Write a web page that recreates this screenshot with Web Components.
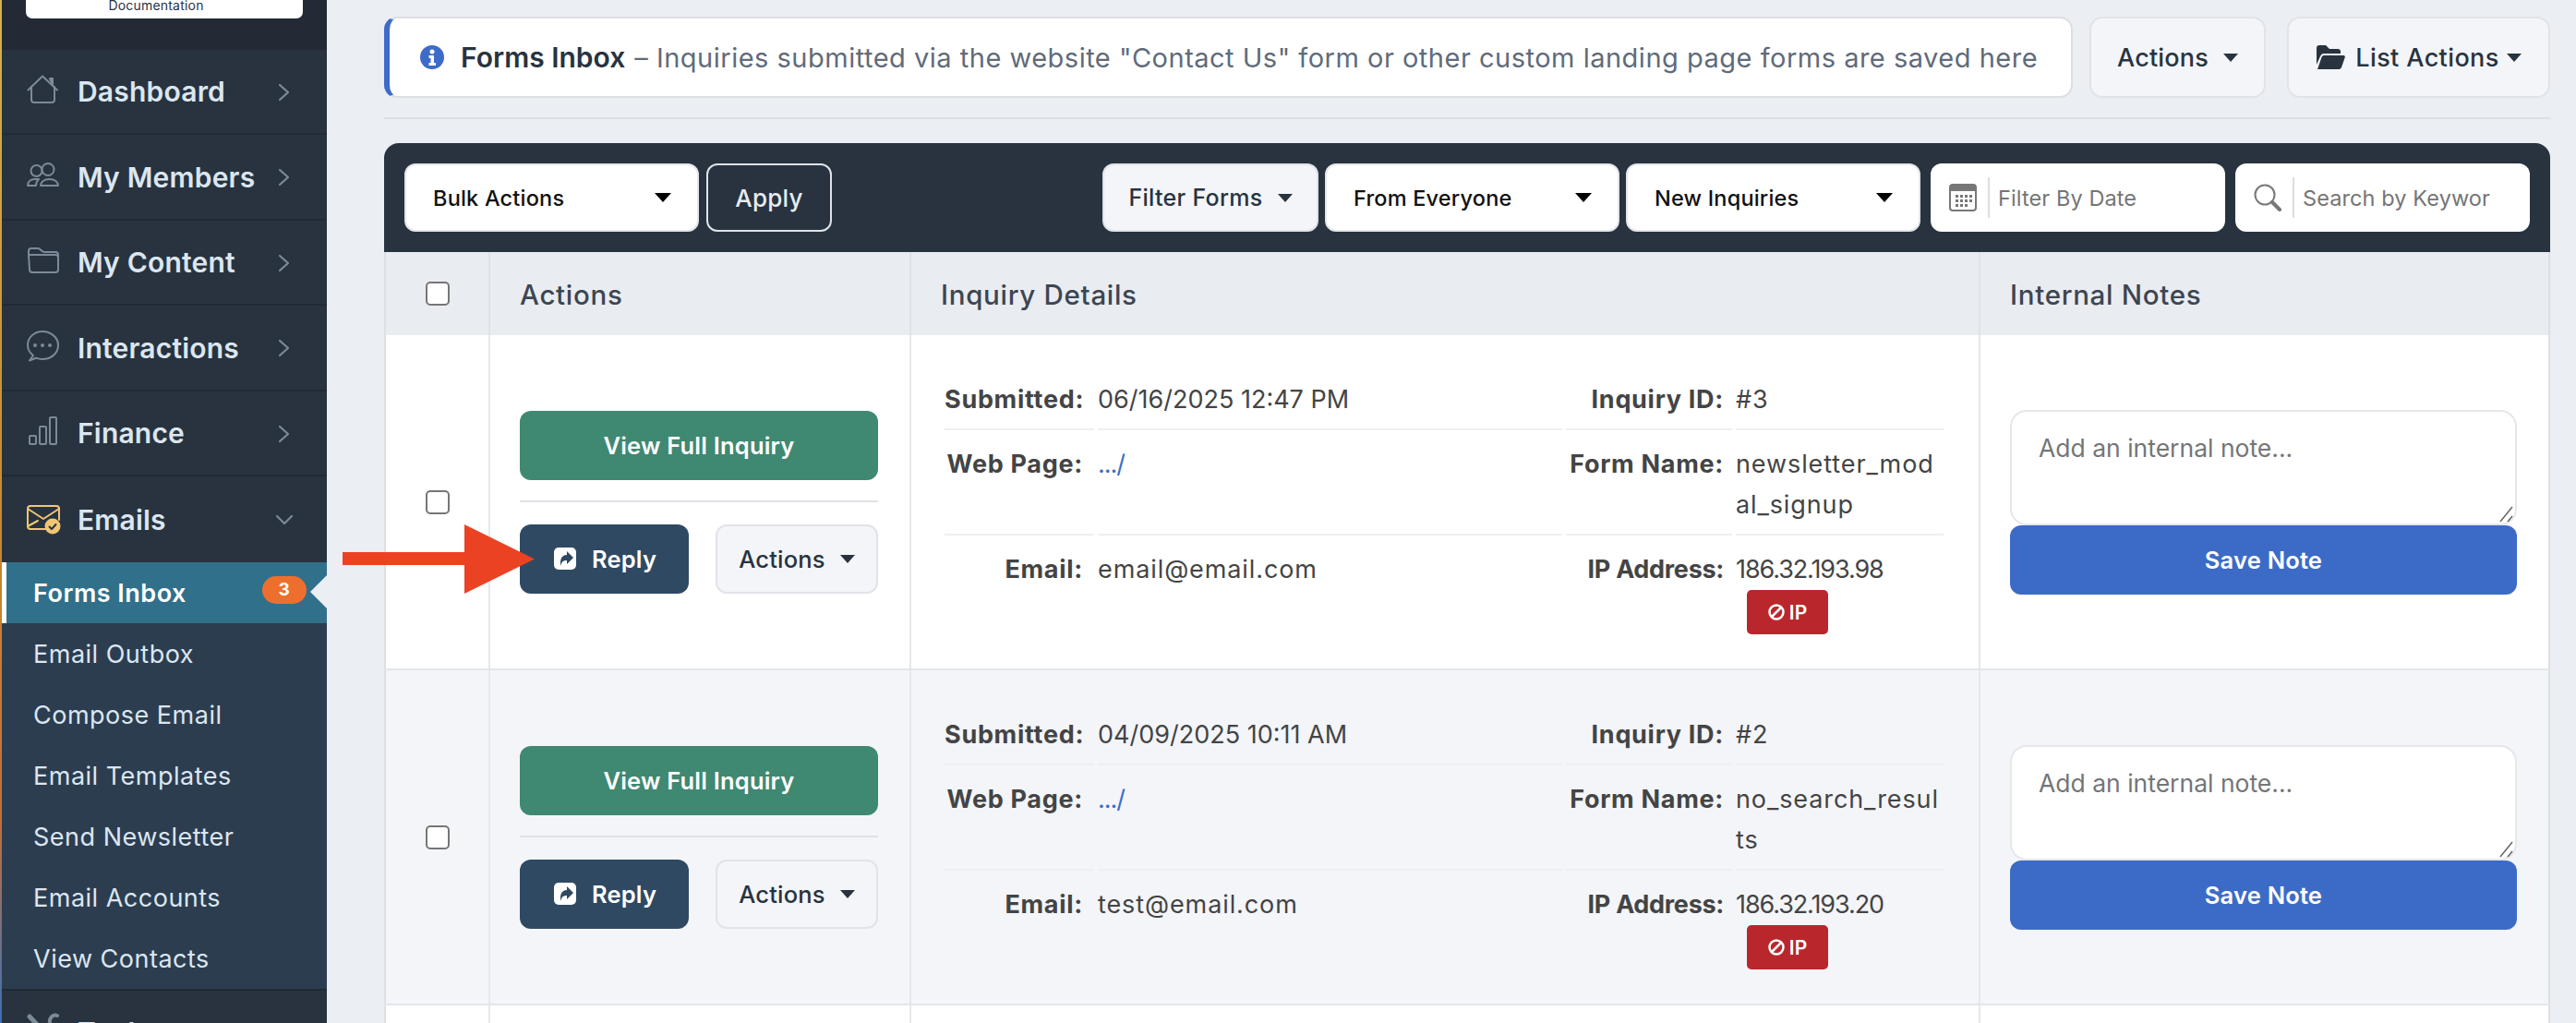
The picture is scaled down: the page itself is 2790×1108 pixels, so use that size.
<!DOCTYPE html>
<html>
<head>
<meta charset="utf-8">
<title>Forms Inbox</title>
<style>
  html, body { margin: 0; padding: 0; }
  body {
    width: 2790px; height: 1108px; overflow: hidden;
    display: flex; background: #ebeef3;
    font-family: Inter, "Noto Sans", sans-serif; color: #28333f;
  }
</style>
</head>
<body>
<app-sidebar>
  <nav-item icon="house" label="Dashboard"></nav-item>
  <nav-item icon="people" label="My Members"></nav-item>
  <nav-item icon="folder" label="My Content"></nav-item>
  <nav-item icon="chat" label="Interactions"></nav-item>
  <nav-item icon="bars" label="Finance"></nav-item>
  <nav-item icon="envelope" label="Emails" open></nav-item>
  <sub-menu>
    <sub-item active badge="3">Forms Inbox</sub-item>
    <sub-item>Email Outbox</sub-item>
    <sub-item>Compose Email</sub-item>
    <sub-item>Email Templates</sub-item>
    <sub-item>Send Newsletter</sub-item>
    <sub-item>Email Accounts</sub-item>
    <sub-item>View Contacts</sub-item>
  </sub-menu>
  <nav-item icon="tools" label="Tools"></nav-item>
</app-sidebar>

<inbox-page>
  <inquiry-row submitted="06/16/2025 12:47 PM" inquiry="#3" form1="newsletter_mod" form2="al_signup" email="email@email.com" ip="186.32.193.98"></inquiry-row>
  <inquiry-row alt submitted="04/09/2025 10:11 AM" inquiry="#2" form1="no_search_resul" form2="ts" email="test@email.com" ip="186.32.193.20"></inquiry-row>
  <inquiry-row blank></inquiry-row>
</inbox-page>

<callout-arrow></callout-arrow>

<script>
const ICONS = {
  house: '<path d="M1.500 19.500 17 4.500l16 15"/><path d="M25 7h3v7z" fill="currentColor"/><path d="M5 16v14a3 3 0 0 0 3 3h19a3 3 0 0 0 3-3V16"/>',
  people: '<circle cx="10.500" cy="15" r="6"/><circle cx="23" cy="13.500" r="6.500"/><path d="M1 31c0-4 3-7 8-7h4c-2 2-3 4-3 7z"/><path d="M15 31c0-4 4-7 9.500-7S34 27 34 31z"/>',
  folder: '<path d="M2 15V9a3 3 0 0 1 3-3h7c3 0 4 4 7 4h12a3 3 0 0 1 3 3v2"/><path d="M2 13h29a3 3 0 0 1 3 3v13a3 3 0 0 1-3 3H6a3 3 0 0 1-3-3z"/>',
  chat: '<path d="M3 35.500l4-5.500C3 27 1 23.500 1 19 1 10 8.500 4 17 4s17 6 17 15-8 15-17 15c-3 0-5-.4-7-1.300z"/><circle cx="9" cy="19" r="1" fill="currentColor"/><circle cx="17" cy="19" r="1" fill="currentColor"/><circle cx="25" cy="19" r="1" fill="currentColor"/>',
  bars: '<rect x="3" y="24" width="7" height="9" rx="1"/><rect x="14" y="14" width="7" height="19" rx="1"/><rect x="25" y="4" width="7" height="29" rx="1"/>',
  envelope: '<g transform="translate(0 5)"><path d="M22 27H4a3 3 0 0 1-3-3V5a3 3 0 0 1 3-3h28a3 3 0 0 1 3 3v12"/><path d="M1 5l17 11L35 5"/><path d="M1 24l11-6"/><circle cx="28" cy="24" r="8.500" fill="currentColor" stroke="none"/><path d="M24.500 24.500l2.500 2.500 4.500-5" stroke="#28333f"/></g>',
  tools: '<path d="M3 4l13 14M20 30l8-14" stroke-width="5"/><path d="M33 3c-5-2-9 3-8 8" stroke-width="4"/>'
};

class AppSidebar extends HTMLElement {
  connectedCallback() {
    this.attachShadow({ mode: 'open' });
    this.shadowRoot.innerHTML = `
      <style>
        * { box-sizing: border-box; }
        :host { box-sizing: border-box; display: flex; flex-direction: column; flex: none; width: 354px; height: 1108px; overflow: hidden; position: relative; padding-left: 2px; background: #28333f; }
        :host::before { content: ""; position: absolute; left: 0; top: 0; bottom: 0; width: 2px; background: linear-gradient(#d4b24a, #c8862f 55%, #c0703a 80%, #3b6fb5); }
        .head { height: 53.500px; flex: none; background: #232a36; padding-left: 26px; }
        .logo { width: 300px; height: 20px; background: #fff; border-radius: 0 0 7px 7px; display: flex; justify-content: center; align-items: center; overflow: hidden; color: #28333f; font-size: 14px; line-height: 11px; padding: 0 18px 9px 0; letter-spacing: .2px; }
      </style>
      <div class="head"><div class="logo">Documentation</div></div>
      <slot></slot>`;
  }
}
customElements.define('app-sidebar', AppSidebar);

class NavItem extends HTMLElement {
  connectedCallback() {
    const open = this.hasAttribute('open');
    const name = this.getAttribute('icon');
    this.attachShadow({ mode: 'open' });
    this.shadowRoot.innerHTML = `
      <style>
        * { box-sizing: border-box; }
        :host { box-sizing: border-box; display: flex; align-items: center; flex: none; height: 92.500px; padding-left: 27px; border-bottom: 2px solid #212a35; color: #dbe6f0; background: #28333f; }
        .ic { width: 36px; height: 36px; margin-top: -6px; color: ${open ? '#f0c674' : '#7d8a98'}; flex: none; }
        .ic svg { display: block; overflow: visible; fill: none; stroke: currentColor; stroke-width: 2; stroke-linecap: round; stroke-linejoin: round; }
        .txt { margin-left: 19px; padding-top: 1px; font-size: 30px; font-weight: 600; letter-spacing: .2px; flex: 1; white-space: nowrap; }
        .chev { width: 20px; height: 20px; margin: 2px 36px 0 0; color: #7d8a98; fill: none; stroke: currentColor; stroke-width: 2.200; stroke-linecap: round; stroke-linejoin: round; }
      </style>
      <span class="ic"><svg width="36" height="36" viewBox="0 0 36 36">${ICONS[name]}</svg></span>
      <span class="txt">${this.getAttribute('label')}</span>
      <svg class="chev" viewBox="0 0 20 20">${open ? '<path d="M2 6l8 8 8-8"/>' : '<path d="M5 2l9 8-9 8"/>'}</svg>`;
    if (open) this.style.borderBottom = '0';
  }
}
customElements.define('nav-item', NavItem);

class SubMenu extends HTMLElement {
  connectedCallback() {
    this.attachShadow({ mode: 'open' });
    this.shadowRoot.innerHTML = `
      <style>
        :host { display: block; flex: none; background: #2c3d50; border-bottom: 2px solid #212a35; }
      </style>
      <slot></slot>`;
  }
}
customElements.define('sub-menu', SubMenu);

class SubItem extends HTMLElement {
  connectedCallback() {
    const active = this.hasAttribute('active');
    const badge = this.getAttribute('badge');
    this.attachShadow({ mode: 'open' });
    this.shadowRoot.innerHTML = `
      <style>
        * { box-sizing: border-box; }
        :host { box-sizing: border-box; display: flex; align-items: center; position: relative; height: 66px; padding-left: 34px; padding-top: 1px; font-size: 27px; color: #dbe6f0; font-weight: 400; letter-spacing: .5px; white-space: nowrap; }
        :host([active]) { background: #31708a; color: #fff; font-weight: 600; border-left: 5px solid #fff; padding-left: 29px; }
        .badge { position: absolute; right: 22px; top: 15px; width: 48px; height: 30px; border-radius: 15px; background: #ee6f2d; color: #fff; font-size: 19px; font-weight: 700; display: flex; align-items: center; justify-content: center; }
        .tip { position: absolute; right: 0; top: 14px; width: 0; height: 0; border: 18px solid transparent; border-right-color: #ebeef3; border-left: 0; }
      </style>
      <slot></slot>
      ${badge ? `<span class="badge">${badge}</span>` : ''}
      ${active ? '<span class="tip"></span>' : ''}`;
  }
}
customElements.define('sub-item', SubItem);

class UiBtn extends HTMLElement {
  connectedCallback() {
    this.attachShadow({ mode: 'open' });
    this.shadowRoot.innerHTML = `
      <style>
        * { box-sizing: border-box; }
        :host { box-sizing: border-box; display: flex; align-items: center; justify-content: center; height: 75px; border-radius: 12px; font-size: 25.500px; font-weight: 600; white-space: nowrap; letter-spacing: .2px; }
        :host([variant=green]) { background: #3f8872; color: #fff; }
        :host([variant=blue]) { background: #3c6bc7; color: #fff; }
        :host([variant=navy]) { background: #304963; color: #fff; }
        :host([variant=light]) { background: #f3f5f9; color: #28333f; border: 2px solid #e1e3e8; font-weight: 500; }
        :host([variant=ghost]) { background: #28333f; color: #e6ecf2; border: 2px solid #dfe3e8; font-weight: 500; }
        .caret { margin-left: var(--caret-gap, 16px); width: 0; height: 0; border: 8px solid transparent; border-top: 9px solid currentColor; border-bottom: 0; }
      </style>
      <slot name="icon"></slot><slot></slot>${this.hasAttribute('caret') ? '<span class="caret"></span>' : ''}`;
  }
}
customElements.define('ui-btn', UiBtn);

class UiSelect extends HTMLElement {
  connectedCallback() {
    this.attachShadow({ mode: 'open' });
    this.shadowRoot.innerHTML = `
      <style>
        * { box-sizing: border-box; }
        :host { box-sizing: border-box; display: flex; align-items: center; justify-content: space-between; width: 319px; height: 74px; background: #fff; border: 2px solid #e4e6ea; border-radius: 12px; padding: 0 28px 0 29px; font-size: 23.500px; font-weight: 500; color: #111; white-space: nowrap; letter-spacing: .2px; }
        .arrow { width: 0; height: 0; border: 9px solid transparent; border-top: 10px solid #000; border-bottom: 0; }
      </style>
      <slot></slot><span class="arrow"></span>`;
  }
}
customElements.define('ui-select', UiSelect);

class UiField extends HTMLElement {
  connectedCallback() {
    const cal = this.getAttribute('icon') === 'calendar';
    this.attachShadow({ mode: 'open' });
    this.shadowRoot.innerHTML = `
      <style>
        * { box-sizing: border-box; }
        :host { box-sizing: border-box; display: flex; align-items: center; width: 319px; height: 74px; background: #fff; border-radius: 12px; padding-left: 20px; overflow: hidden; font-size: 23.500px; color: #757575; white-space: nowrap; letter-spacing: .1px; }
        svg { flex: none; display: block; }
        .sep { width: 2px; height: 44px; background: #ddd; margin: 0 9px 0 12px; flex: none; }
      </style>
      ${cal
        ? `<svg width="30" height="30" viewBox="0 0 30 30"><rect x="1" y="1" width="28" height="28" rx="3" fill="#fff" stroke="#777" stroke-width="2"/><path d="M1 4a3 3 0 0 1 3-3h22a3 3 0 0 1 3 3v4H1z" fill="#777"/><g fill="#777"><rect x="7" y="12" width="3" height="3"/><rect x="12" y="12" width="3" height="3"/><rect x="17" y="12" width="3" height="3"/><rect x="22" y="12" width="3" height="3"/><rect x="7" y="17" width="3" height="3"/><rect x="12" y="17" width="3" height="3"/><rect x="17" y="17" width="3" height="3"/><rect x="22" y="17" width="3" height="3"/><rect x="7" y="22" width="3" height="3"/><rect x="12" y="22" width="3" height="3"/><rect x="17" y="22" width="3" height="3"/></g></svg>`
        : `<svg width="30" height="30" viewBox="0 0 30 30" fill="none" stroke="#777"><circle cx="12" cy="12" r="10.500" stroke-width="2"/><path d="M20 20l8 8" stroke-width="4" stroke-linecap="round"/></svg>`}
      <span class="sep"></span><slot></slot>`;
  }
}
customElements.define('ui-field', UiField);

class UiCheck extends HTMLElement {
  connectedCallback() {
    this.attachShadow({ mode: 'open' });
    this.shadowRoot.innerHTML = `
      <style>
        :host { display: block; box-sizing: border-box; width: 26px; height: 26px; background: #fff; border: 2px solid #767676; border-radius: 5px; }
      </style>`;
  }
}
customElements.define('ui-check', UiCheck);

class InboxPage extends HTMLElement {
  connectedCallback() {
    this.attachShadow({ mode: 'open' });
    this.shadowRoot.innerHTML = `
      <style>
        * { box-sizing: border-box; }
        :host { box-sizing: border-box; display: block; flex: 1; min-width: 0; padding: 18px 28px 0 62px; }
        .top { display: flex; height: 88px; }
        .alert { flex: 1; display: flex; align-items: center; background: #fff; border: 2px solid #dcdee2; border-left: 6px solid #3d6bc9; border-radius: 14px; padding-left: 33px; font-size: 29px; letter-spacing: .5px; white-space: nowrap; color: #5f6b7a; }
        .alert svg { flex: none; margin-right: 18px; }
        .alert b { color: #28333f; font-weight: 600; margin-right: 10px; font-size: 30px; letter-spacing: 0; }
        .top ui-btn { height: 88px; border-radius: 14px; font-size: 27px; }
        .a1 { width: 191px; margin-left: 18px; }
        .a2 { width: 285px; margin-left: 23px; --caret-gap: 8px; letter-spacing: .4px; }
        .a2 svg { margin-right: 11px; }
        hr { border: 0; height: 2px; margin: 21px 0 26px; background: #dcdfe3; }
        .bar { height: 118px; background: #28333f; border-radius: 16px 16px 0 0; display: flex; align-items: center; padding: 0 22px; }
        .bar ui-btn { height: 74px; }
        .apply { width: 136px; margin-left: 8px; font-size: 26px; }
        .filter { width: 234px; margin-left: auto; font-size: 25px; letter-spacing: .3px; }
        .bar ui-select { margin-left: 7px; }
        .bar ui-select:first-child { margin-left: 0; }
        .d { margin-left: 11px; }
        .head { display: grid; grid-template-columns: 113px 456px 1158px 1fr; height: 90px; background: #e9ecf1; border-left: 2px solid #dcdfe3; border-right: 2px solid #dcdfe3; font-size: 29.500px; letter-spacing: .7px; font-weight: 500; color: #3c4652; }
        .head div { display: flex; align-items: center; padding: 1px 0 0 32px; border-right: 2px solid #dfe2e6; }
        .head div:first-child { justify-content: center; padding: 0; }
        .head div:last-child { border-right: 0; }
      </style>
      <div class="top">
        <div class="alert">
          <svg width="26" height="26" viewBox="0 0 26 26"><circle cx="13" cy="13" r="13" fill="#3d6bc9"/><circle cx="13" cy="7" r="2.500" fill="#fff"/><path d="M9.500 11h5.500v8h2v3H9.500v-3h2v-5h-2z" fill="#fff"/></svg>
          <b>Forms Inbox</b><span>– Inquiries submitted via the website "Contact Us" form or other custom landing page forms are saved here</span>
        </div>
        <ui-btn class="a1" variant="light" caret>Actions</ui-btn>
        <ui-btn class="a2" variant="light" caret>
          <svg slot="icon" width="32" height="28" viewBox="0 0 32 28"><path d="M1 4a3 3 0 0 1 3-3h7l4 4h9a3 3 0 0 1 3 3v2H9c-2 0-3 1-4 3l-4 9z" fill="#28333f"/><path d="M9 12h21c1.500 0 2.200 1 1.600 2.500L28 25a3 3 0 0 1-3 2H2l4.500-13C7 12.800 8 12 9 12z" fill="#28333f"/></svg>List Actions</ui-btn>
      </div>
      <hr>
      <div class="bar">
        <ui-select>Bulk Actions</ui-select>
        <ui-btn class="apply" variant="ghost">Apply</ui-btn>
        <ui-btn class="filter" variant="light" caret>Filter Forms</ui-btn>
        <ui-select>From Everyone</ui-select>
        <ui-select>New Inquiries</ui-select>
        <ui-field class="d" icon="calendar">Filter By Date</ui-field>
        <ui-field class="d" icon="search">Search by Keywor</ui-field>
      </div>
      <div class="head">
        <div><ui-check></ui-check></div>
        <div>Actions</div>
        <div>Inquiry Details</div>
        <div>Internal Notes</div>
      </div>
      <slot></slot>`;
  }
}
customElements.define('inbox-page', InboxPage);

class InquiryRow extends HTMLElement {
  connectedCallback() {
    const a = (n) => this.getAttribute(n) || '';
    this.attachShadow({ mode: 'open' });
    if (this.hasAttribute('blank')) {
      this.shadowRoot.innerHTML = `
        <style>
          :host { box-sizing: border-box; display: grid; grid-template-columns: 113px 456px 1158px 1fr; height: 120px; background: #fff; border-left: 2px solid #dcdfe3; border-right: 2px solid #dcdfe3; }
          div { border-right: 2px solid #e6e8ec; }
          div:last-child { border-right: 0; }
        </style>
        <div></div><div></div><div></div><div></div>`;
      return;
    }
    this.shadowRoot.innerHTML = `
      <style>
        * { box-sizing: border-box; }
        :host { box-sizing: border-box; display: grid; grid-template-columns: 113px 456px 1158px 1fr; height: 363px; background: #fff; border-left: 2px solid #dcdfe3; border-right: 2px solid #dcdfe3; border-bottom: 2px solid #e4e6ea; }
        :host([alt]) { background: #f3f5f9; }
        .c { border-right: 2px solid #e6e8ec; display: flex; flex-direction: column; justify-content: center; }
        .c:last-child { border-right: 0; }
        .chk { align-items: center; }
        .act { padding: 0 34px 0 32px; }
        .act hr { border: 0; height: 2px; width: 100%; margin: 22px 0 24px; background: #dfe1e5; }
        .pair { display: flex; justify-content: space-between; }
        .pair ui-btn:first-child { width: 183px; padding-left: 2px; }
        .pair ui-btn:last-child { width: 176px; }
        .det { padding: 7px 36px 0; }
        .grid { display: grid; grid-template-columns: 162px 503px 180px 225px; column-gap: 4px; font-size: 27px; line-height: 44px; color: #444; letter-spacing: .9px; }
        .l, .v { padding: 13px 0 9px; border-bottom: 2px solid #eeeff1; margin-bottom: 2px; white-space: nowrap; }
        .l { text-align: right; font-weight: 700; padding-right: 12px; letter-spacing: .7px; }
        .l.r { padding-right: 9px; }
        .l.tight { letter-spacing: -.3px; }
        .num { letter-spacing: 0; }
        .ip { letter-spacing: -1.100px; }
        .last { border-bottom: 0; margin-bottom: 0; }
        a { color: #3c6bc7; text-decoration: none; letter-spacing: -1px; }
        .ban { display: flex; align-items: center; justify-content: center; gap: 5px; width: 88px; height: 48px; margin-left: 12px; background: #b9272d; color: #fff; border-radius: 5px; font-size: 21px; font-weight: 600; line-height: 1; letter-spacing: 0; }
        .note { padding: 0 34px 0 32px; }
        .ta { position: relative; height: 125px; background: #fff; border: 2px solid #e6e7ea; border-radius: 18px; padding: 17px 0 0 29px; font-size: 26.500px; line-height: 44px; color: #757575; }
        .ta svg { position: absolute; right: 1px; bottom: 1px; }
      </style>
      <div class="c chk"><ui-check></ui-check></div>
      <div class="c act">
        <ui-btn variant="green">View Full Inquiry</ui-btn>
        <hr>
        <div class="pair">
          <ui-btn variant="navy">
            <svg slot="icon" width="24" height="24" viewBox="0 0 24 24" style="margin-right:17px"><rect width="24" height="24" rx="5" fill="#fff"/><path d="M14 4l7 7-7 7v-4c-4 0-6 1.500-6.500 6C6 14 8 8 14 8z" fill="#304963"/></svg>Reply</ui-btn>
          <ui-btn variant="light" caret>Actions</ui-btn>
        </div>
      </div>
      <div class="c det">
        <div class="grid">
          <div class="l">Submitted:</div><div class="v num">${a('submitted')}</div>
          <div class="l r">Inquiry ID:</div><div class="v">${a('inquiry')}</div>
          <div class="l">Web Page:</div><div class="v"><a>.../</a></div>
          <div class="l r">Form Name:</div><div class="v">${a('form1')}<br>${a('form2')}</div>
          <div class="l last">Email:</div><div class="v last">${a('email')}</div>
          <div class="l r tight last">IP Address:</div><div class="v last"><span class="ip">${a('ip')}</span>
            <div class="ban"><svg width="18" height="18" viewBox="0 0 18 18" fill="none" stroke="#fff" stroke-width="2.500"><circle cx="9" cy="9" r="7.500"/><path d="M4 14 14 4"/></svg>IP</div>
          </div>
        </div>
      </div>
      <div class="c note">
        <div class="ta">Add an internal note...
          <svg width="16" height="20" viewBox="0 0 16 20" stroke="#666" stroke-width="1.500"><path d="M1 19 14 3M9 19l5-6"/></svg>
        </div>
        <ui-btn variant="blue">Save Note</ui-btn>
      </div>`;
  }
}
customElements.define('inquiry-row', InquiryRow);

class CalloutArrow extends HTMLElement {
  connectedCallback() {
    this.attachShadow({ mode: 'open' });
    this.shadowRoot.innerHTML = `
      <style>
        :host { position: absolute; left: 371px; top: 568px; width: 208px; height: 75px; display: block; }
        svg { display: block; }
      </style>
      <svg width="208" height="75" viewBox="0 0 208 75"><path d="M0 30h132V0l76 37.500L132 75V44H0z" fill="#ec4224"/></svg>`;
  }
}
customElements.define('callout-arrow', CalloutArrow);
</script>
</body>
</html>
